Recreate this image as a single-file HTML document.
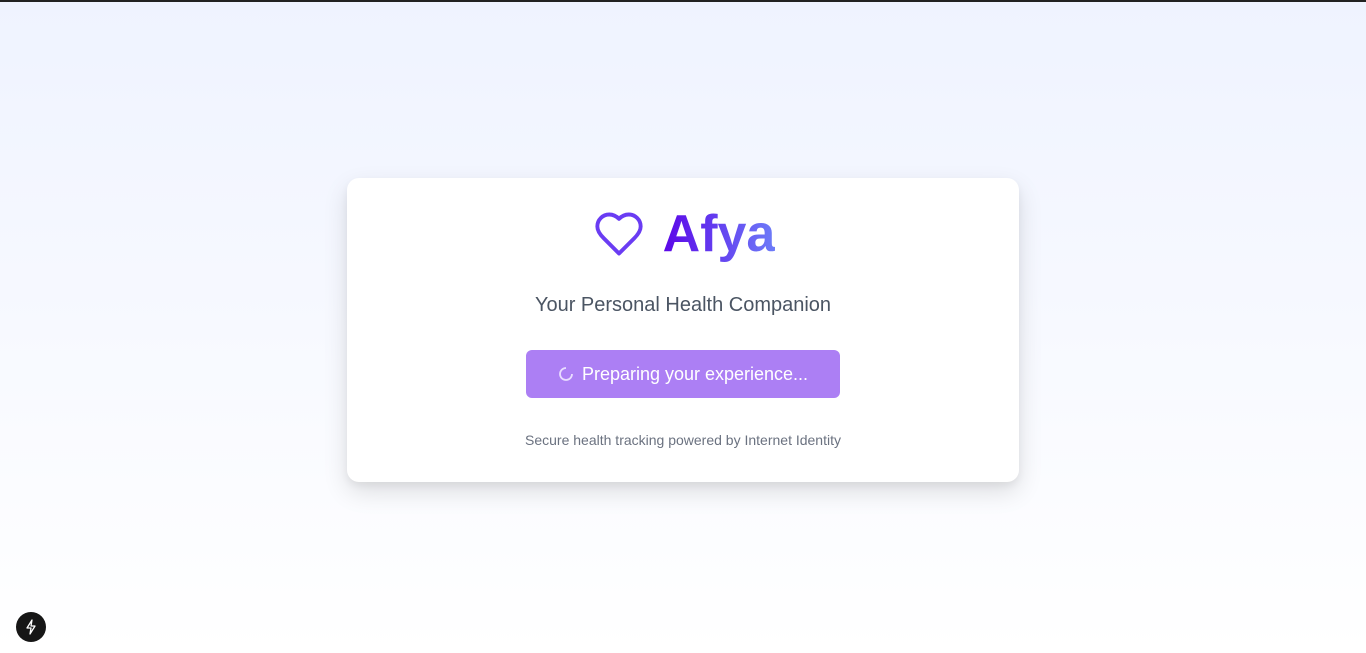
<!DOCTYPE html>
<html><head><style>
html,body{margin:0;height:653px;overflow:hidden}
body{background:linear-gradient(#eff3ff,#ffffff);font-family:"Liberation Sans",sans-serif;border-top:2px solid #222;box-sizing:border-box;position:relative}
.card{position:absolute;left:347px;top:176px;width:672px;height:304px;background:#fff;border-radius:12px;box-shadow:0 10px 25px rgba(0,0,0,.12),0 4px 8px rgba(0,0,0,.05);text-align:center}
.logo{position:absolute;left:0;right:0;top:26px;height:60px;display:flex;justify-content:center;align-items:center;gap:16px}
.title{font-size:52px;font-weight:bold;background:linear-gradient(90deg,#5b06e8,#6d7cf8);-webkit-background-clip:text;color:transparent;line-height:60px}
.sub{position:absolute;left:0;right:0;top:116px;font-size:20px;color:#4b5563}
.btn{position:absolute;left:179px;top:172px;width:314px;height:48px;background:#ac7ff4;border-radius:6px;color:#fff;font-size:18px;display:flex;align-items:center;justify-content:center;gap:8px}
.foot{position:absolute;left:0;right:0;top:254px;font-size:14px;color:#6b7280}
.fab{position:absolute;left:16px;top:610px;width:30px;height:30px;border-radius:50%;background:#161616;display:flex;align-items:center;justify-content:center}
</style></head><body>
<div class="card">
 <div class="logo">
  <svg width="56" height="52" viewBox="0 0 24 24" fill="none" stroke="#6a3cf3" stroke-width="1.8" stroke-linejoin="round"><path d="M19 14c1.49-1.46 3-3.21 3-5.5A5.5 5.5 0 0 0 16.5 3c-1.76 0-3 .5-4.5 2-1.5-1.5-2.74-2-4.5-2A5.5 5.5 0 0 0 2 8.5c0 2.3 1.5 4.05 3 5.5l7 7Z"/></svg>
  <span class="title">Afya</span>
 </div>
 <div class="sub">Your Personal Health Companion</div>
 <div class="btn"><svg width="16" height="16" viewBox="0 0 16 16"><path d="M8 2a6 6 0 1 0 6 6" fill="none" stroke="#e9ddff" stroke-width="1.8"/></svg>Preparing your experience...</div>
 <div class="foot">Secure health tracking powered by Internet Identity</div>
</div>
<div class="fab"><svg width="14" height="16" viewBox="0 0 14 16"><path d="M8 1L3 9h4l-1 6 5-8H7z" fill="none" stroke="#fff" stroke-width="1.3" stroke-linejoin="round"/></svg></div>
</body></html>
